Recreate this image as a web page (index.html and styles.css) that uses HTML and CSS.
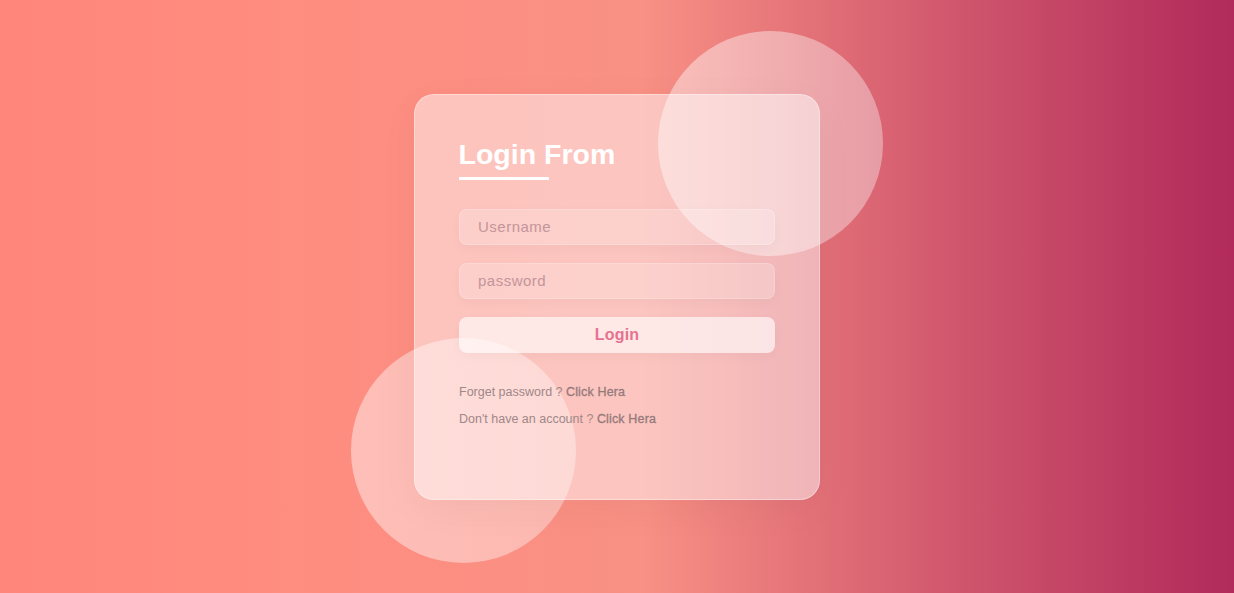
FILE: index.html
```html
<!DOCTYPE html>
<html lang="en">
<head>
<meta charset="utf-8">
<title>Login From</title>
<link rel="stylesheet" href="styles.css">
</head>
<body>
<main class="stage">
  <div class="scene">
    <div class="circle circle-top"></div>
    <div class="circle circle-bottom"></div>
    <form class="card">
      <h1 class="title">Login From</h1>
      <div class="title-bar"></div>
      <div class="fields">
        <input class="field" type="text" placeholder="Username">
        <input class="field" type="password" placeholder="password">
        <button class="btn" type="button">Login</button>
      </div>
      <div class="links">
        <p class="link-line">Forget password ? <a class="link" href="#">Click Hera</a></p>
        <p class="link-line">Don't have an account ? <a class="link" href="#">Click Hera</a></p>
      </div>
    </form>
  </div>
</main>
</body>
</html>
```

FILE: styles.css
```css
* { box-sizing: border-box; }

html, body {
  margin: 0;
  padding: 0;
  height: 100%;
}

body {
  font-family: "Liberation Sans", Arial, sans-serif;
  background: linear-gradient(to right, #ff8177 0%, #ff867a 0%, #ff8c7f 21%, #f99185 52%, #cf556c 78%, #b12a5b 100%);
  overflow: hidden;
}

.stage {
  height: 100vh;
  display: flex;
  align-items: center;
  justify-content: center;
}

.scene {
  position: relative;
  width: 406px;
  height: 406px;
}

.circle {
  position: absolute;
  width: 225px;
  height: 225px;
  border-radius: 50%;
  background: linear-gradient(to right, rgba(255, 255, 255, 0.44), rgba(255, 255, 255, 0.36));
  z-index: 0;
}

.circle-top {
  left: 244px;
  top: -63px;
}

.circle-bottom {
  left: -63px;
  top: 244px;
}

.card {
  position: relative;
  z-index: 1;
  width: 406px;
  height: 406px;
  border-radius: 20px;
  border: 1px solid rgba(255, 255, 255, 0.35);
  background: rgba(255, 255, 255, 0.48);
  box-shadow: 0 10px 40px rgba(0, 0, 0, 0.04);
  padding: 43px 44px 0;
  display: flex;
  flex-direction: column;
}

.title {
  margin: 0 0 0 -0.5px;
  font-size: 28.5px;
  line-height: 33px;
  font-weight: 700;
  color: #ffffff;
}

.title-bar {
  width: 90px;
  height: 3px;
  margin-top: 6.5px;
  margin-left: -0.5px;
  background: #ffffff;
}

.fields {
  margin-top: 28.5px;
  display: flex;
  flex-direction: column;
  gap: 18px;
}

.field {
  width: 100%;
  height: 36px;
  border-radius: 8px;
  border: 1px solid rgba(255, 255, 255, 0.18);
  background: rgba(255, 255, 255, 0.2);
  box-shadow: 0 4px 12px rgba(0, 0, 0, 0.03);
  padding: 0 18px;
  font-family: inherit;
  font-size: 15px;
  letter-spacing: 0.5px;
  color: #a06a72;
  outline: none;
}

.field::placeholder {
  color: #c3959a;
  opacity: 1;
}

.btn {
  width: 100%;
  height: 36px;
  border-radius: 8px;
  border: none;
  background: rgba(255, 255, 255, 0.62);
  box-shadow: 0 4px 12px rgba(0, 0, 0, 0.03);
  font-family: inherit;
  font-size: 16px;
  font-weight: 700;
  letter-spacing: 0.2px;
  color: #e67290;
  cursor: pointer;
}

.links {
  margin-top: 26px;
}

.link-line {
  margin: 0;
  font-size: 12.5px;
  line-height: 27px;
  color: #a08788;
}

.link {
  color: #957a7c;
  font-weight: 400;
  letter-spacing: 0.15px;
  -webkit-text-stroke: 0.3px #957a7c;
  text-decoration: none;
}
```
